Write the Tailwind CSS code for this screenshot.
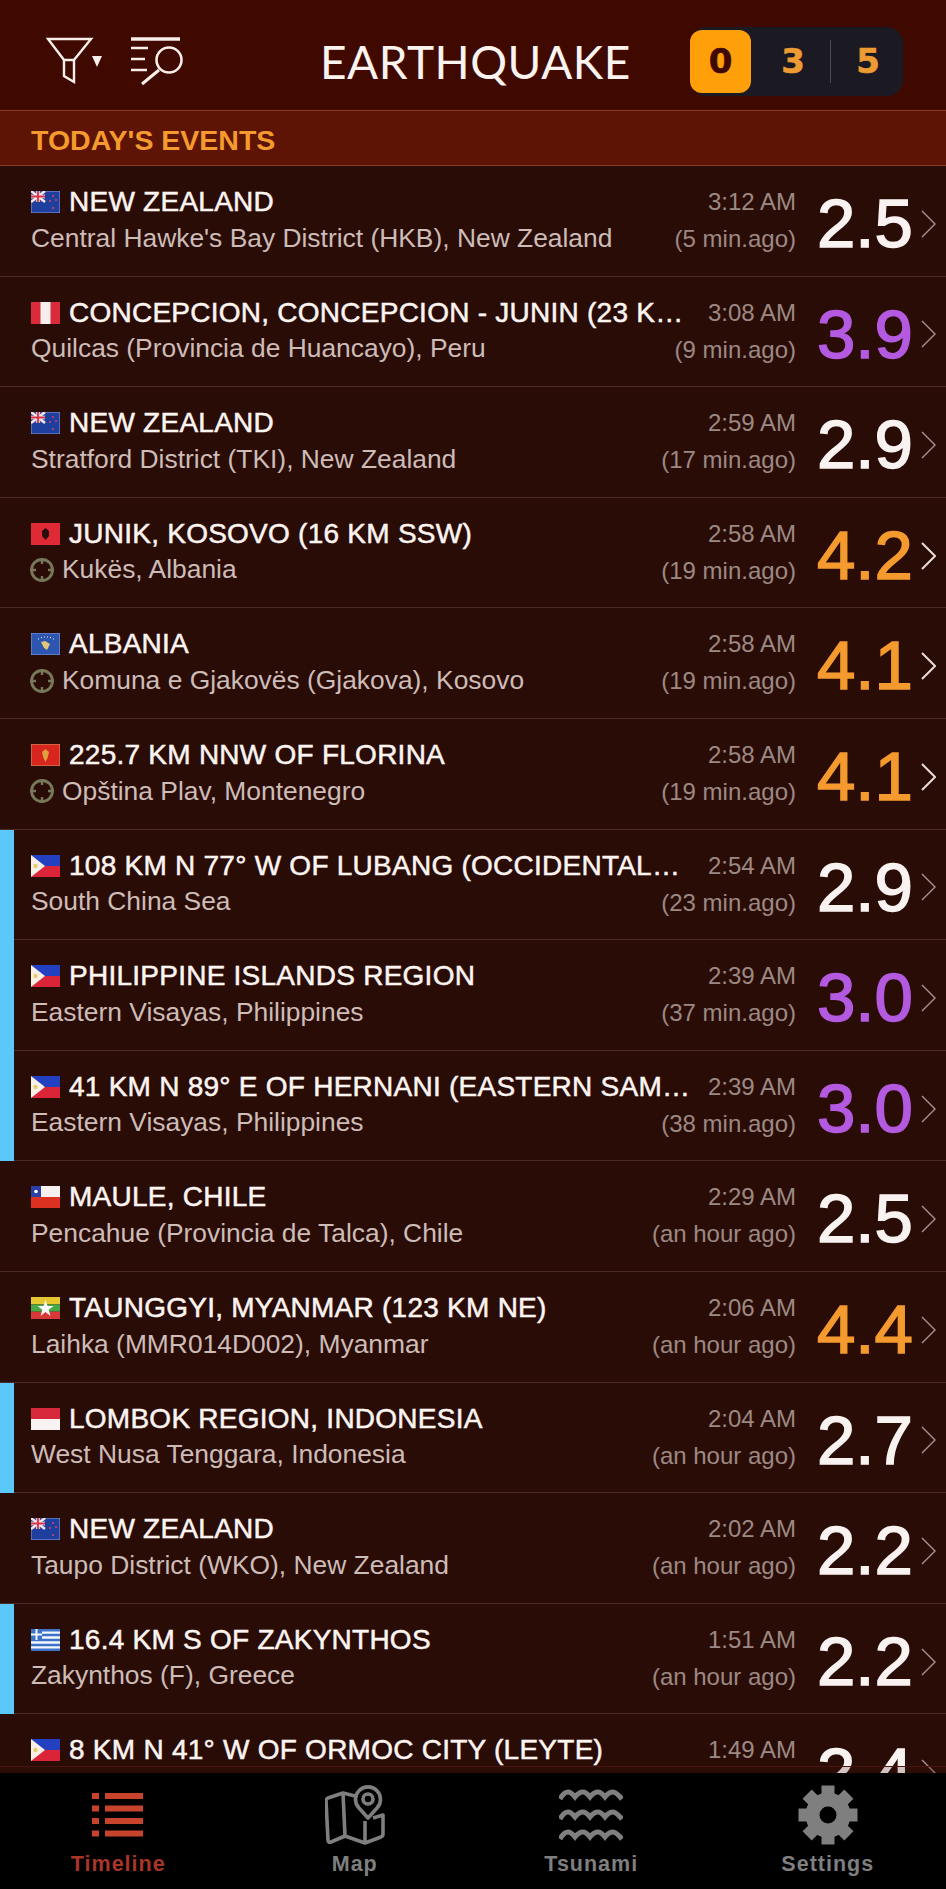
<!DOCTYPE html>
<html><head><meta charset="utf-8"><script src="https://cdn.jsdelivr.net/npm/@tailwindcss/browser@4"></script></head>
<body class="m-0 bg-black">
<div class="w-[946px] h-[1889px] flex flex-col overflow-hidden bg-[#2a0c06] font-['Liberation_Sans',Arial,sans-serif]">
<header class="h-[110px] shrink-0 bg-[#400900] flex items-center pt-[13px]">
  <div class="w-[320px] shrink-0 flex items-center pl-[46px] gap-[25px]">
    <svg width="60" height="50" viewBox="0 0 60 50" fill="none" stroke="#f8eeea" stroke-width="2.400"><path d="M2 2H45L28 23V45L18 39V23ZM18 23H28"/><path d="M46 19H56L51 30Z" fill="#f8eeea" stroke="none"/></svg>
    <svg width="52" height="50" viewBox="0 0 52 50" fill="none" stroke="#f8eeea" stroke-width="2.600"><path d="M0 2H49" stroke-width="3.500"/><path d="M0 11H17M0 22H14M0 33H16"/><circle cx="38" cy="23" r="12.500"/><path d="M28 33L11 47" stroke-width="3"/></svg>
  </div>
  <h1 class="text-[46px] leading-none font-normal text-[#fbf3ef] font-['Lato',sans-serif] tracking-[0.5px] w-[370px]">EARTHQUAKE</h1>
  <div class="w-[213px] h-[69px] rounded-[16px] bg-[#1b1a22] flex items-center font-bold text-[34px] text-[#ee9b34] font-['DejaVu_Sans',sans-serif] [-webkit-text-stroke:0.6px_currentColor]">
    <div class="w-[61px] h-[63px] rounded-[12px] bg-[#ff9f0a] text-[#3f0800] flex items-center justify-center">0</div>
    <div class="w-[79px] pl-[5px] text-center">3</div>
    <div class="w-px h-[43px] bg-[#4b4a50]"></div>
    <div class="w-[72px] pl-[2px] text-center">5</div>
  </div>
</header>
<div class="h-[56px] shrink-0 bg-[#5e1404] border-y border-[#873a22] flex items-center pl-[31px] pt-[4px] text-[28.500px] font-bold text-[#f49a2e]">TODAY'S EVENTS</div>
<main class="flex-1 overflow-hidden min-h-0">

<div class="flex h-[110.600px]"><div class="flex-1 flex pl-[31px] border-b border-[#4c2b25]"><div class="flex-1 min-w-0 pt-[18px]"><div class="flex items-center h-[36px] gap-[9px]"><svg width="29" height="22" viewBox="0 0 29 22" class="shrink-0"><rect width="29" height="22" fill="#1f3f9e" stroke="#8ea0d8"/><rect width="14" height="11" fill="#3c4b9a"/><path d="M0 0L14 11M14 0L0 11" stroke="#f3e6e6" stroke-width="2.500"/><path d="M7 0V11M0 5.500H14" stroke="#f3e6e6" stroke-width="3.500"/><path d="M7 0V11M0 5.500H14" stroke="#d8304a" stroke-width="1.800"/><circle cx="22" cy="5" r="1" fill="#e04060"/><circle cx="25" cy="9" r="1" fill="#e04060"/><circle cx="19" cy="10" r="1" fill="#e04060"/><circle cx="22" cy="17" r="1" fill="#e04060"/></svg><span class="text-[28px] text-[#fbf4f1] whitespace-nowrap [-webkit-text-stroke:0.5px_#fbf4f1] tracking-[0.25px]">NEW ZEALAND</span></div><div class="h-[37px] flex items-center text-[26.400px] text-[#cdbcb8] whitespace-nowrap">Central Hawke's Bay District (HKB), New Zealand</div></div><div class="w-[91px] shrink-0 pt-[18px] flex flex-col items-end text-[24px] text-[#9c8984] whitespace-nowrap"><div class="h-[36px] leading-[36px]">3:12 AM</div><div class="h-[37px] leading-[37px]">(5 min.ago)</div></div><div class="w-[104px] ml-[21px] shrink-0 flex items-center pt-[6px] text-[69px] text-[#f8f2f0] [-webkit-text-stroke:1.500px_currentColor]">2.5</div><div class="w-[25px] shrink-0 flex items-center pt-[6px]"><svg width="15" height="28" viewBox="0 0 15 28" fill="none" stroke="#a8938e" stroke-width="1.400"><path d="M1 1L14 14L1 27"/></svg></div></div></div>

<div class="flex h-[110.600px]"><div class="flex-1 flex pl-[31px] border-b border-[#4c2b25]"><div class="flex-1 min-w-0 pt-[18px]"><div class="flex items-center h-[36px] gap-[9px]"><svg width="29" height="22" viewBox="0 0 29 22" class="shrink-0"><rect width="29" height="22" fill="#f6eeee"/><rect width="9.500" height="22" fill="#d92b3a"/><rect x="19.500" width="9.500" height="22" fill="#d92b3a"/></svg><span class="text-[28px] text-[#fbf4f1] whitespace-nowrap [-webkit-text-stroke:0.5px_#fbf4f1] tracking-[0.25px]">CONCEPCION, CONCEPCION - JUNIN (23 K…</span></div><div class="h-[37px] flex items-center text-[26.400px] text-[#cdbcb8] whitespace-nowrap">Quilcas (Provincia de Huancayo), Peru</div></div><div class="w-[91px] shrink-0 pt-[18px] flex flex-col items-end text-[24px] text-[#9c8984] whitespace-nowrap"><div class="h-[36px] leading-[36px]">3:08 AM</div><div class="h-[37px] leading-[37px]">(9 min.ago)</div></div><div class="w-[104px] ml-[21px] shrink-0 flex items-center pt-[6px] text-[69px] text-[#b45ae0] [-webkit-text-stroke:1.500px_currentColor]">3.9</div><div class="w-[25px] shrink-0 flex items-center pt-[6px]"><svg width="15" height="28" viewBox="0 0 15 28" fill="none" stroke="#a8938e" stroke-width="1.400"><path d="M1 1L14 14L1 27"/></svg></div></div></div>

<div class="flex h-[110.600px]"><div class="flex-1 flex pl-[31px] border-b border-[#4c2b25]"><div class="flex-1 min-w-0 pt-[18px]"><div class="flex items-center h-[36px] gap-[9px]"><svg width="29" height="22" viewBox="0 0 29 22" class="shrink-0"><rect width="29" height="22" fill="#1f3f9e" stroke="#8ea0d8"/><rect width="14" height="11" fill="#3c4b9a"/><path d="M0 0L14 11M14 0L0 11" stroke="#f3e6e6" stroke-width="2.500"/><path d="M7 0V11M0 5.500H14" stroke="#f3e6e6" stroke-width="3.500"/><path d="M7 0V11M0 5.500H14" stroke="#d8304a" stroke-width="1.800"/><circle cx="22" cy="5" r="1" fill="#e04060"/><circle cx="25" cy="9" r="1" fill="#e04060"/><circle cx="19" cy="10" r="1" fill="#e04060"/><circle cx="22" cy="17" r="1" fill="#e04060"/></svg><span class="text-[28px] text-[#fbf4f1] whitespace-nowrap [-webkit-text-stroke:0.5px_#fbf4f1] tracking-[0.25px]">NEW ZEALAND</span></div><div class="h-[37px] flex items-center text-[26.400px] text-[#cdbcb8] whitespace-nowrap">Stratford District (TKI), New Zealand</div></div><div class="w-[91px] shrink-0 pt-[18px] flex flex-col items-end text-[24px] text-[#9c8984] whitespace-nowrap"><div class="h-[36px] leading-[36px]">2:59 AM</div><div class="h-[37px] leading-[37px]">(17 min.ago)</div></div><div class="w-[104px] ml-[21px] shrink-0 flex items-center pt-[6px] text-[69px] text-[#f8f2f0] [-webkit-text-stroke:1.500px_currentColor]">2.9</div><div class="w-[25px] shrink-0 flex items-center pt-[6px]"><svg width="15" height="28" viewBox="0 0 15 28" fill="none" stroke="#a8938e" stroke-width="1.400"><path d="M1 1L14 14L1 27"/></svg></div></div></div>

<div class="flex h-[110.600px]"><div class="flex-1 flex pl-[31px] border-b border-[#4c2b25]"><div class="flex-1 min-w-0 pt-[18px]"><div class="flex items-center h-[36px] gap-[9px]"><svg width="29" height="22" viewBox="0 0 29 22" class="shrink-0"><rect width="29" height="22" fill="#df2a35"/><path d="M14.500 5L18 8V13L14.500 17L11 13V8Z" fill="#2a0c0c"/></svg><span class="text-[28px] text-[#fbf4f1] whitespace-nowrap [-webkit-text-stroke:0.5px_#fbf4f1] tracking-[0.25px]">JUNIK, KOSOVO (16 KM SSW)</span></div><div class="h-[37px] flex items-center text-[26.400px] text-[#cdbcb8] whitespace-nowrap gap-[7px] -ml-[2px]"><svg width="26" height="26" viewBox="0 0 26 26" fill="none" stroke="#77775a" stroke-width="2.800" class="shrink-0"><circle cx="13" cy="13" r="10.500"/><path d="M13 1V7M13 19V25M1 13H7M19 13H25" stroke-width="2.400"/></svg><span>Kukës, Albania</span></div></div><div class="w-[91px] shrink-0 pt-[18px] flex flex-col items-end text-[24px] text-[#9c8984] whitespace-nowrap"><div class="h-[36px] leading-[36px]">2:58 AM</div><div class="h-[37px] leading-[37px]">(19 min.ago)</div></div><div class="w-[104px] ml-[21px] shrink-0 flex items-center pt-[6px] text-[69px] text-[#f49a2e] [-webkit-text-stroke:1.500px_currentColor]">4.2</div><div class="w-[25px] shrink-0 flex items-center pt-[6px]"><svg width="15" height="28" viewBox="0 0 15 28" fill="none" stroke="#e8dcd8" stroke-width="2"><path d="M1 1L14 14L1 27"/></svg></div></div></div>

<div class="flex h-[110.600px]"><div class="flex-1 flex pl-[31px] border-b border-[#4c2b25]"><div class="flex-1 min-w-0 pt-[18px]"><div class="flex items-center h-[36px] gap-[9px]"><svg width="29" height="22" viewBox="0 0 29 22" class="shrink-0"><rect width="29" height="22" fill="#2d56b0" stroke="#8ea0d8"/><path d="M10 9L14 8L19 11L16 17L13 15Z" fill="#e0c878"/><path d="M7 6H8M10 4.500H11M13 4H14M16 4H17M19 4.500H20M22 6H23" stroke="#f3ead8" stroke-width="1.200"/></svg><span class="text-[28px] text-[#fbf4f1] whitespace-nowrap [-webkit-text-stroke:0.5px_#fbf4f1] tracking-[0.25px]">ALBANIA</span></div><div class="h-[37px] flex items-center text-[26.400px] text-[#cdbcb8] whitespace-nowrap gap-[7px] -ml-[2px]"><svg width="26" height="26" viewBox="0 0 26 26" fill="none" stroke="#77775a" stroke-width="2.800" class="shrink-0"><circle cx="13" cy="13" r="10.500"/><path d="M13 1V7M13 19V25M1 13H7M19 13H25" stroke-width="2.400"/></svg><span>Komuna e Gjakovës (Gjakova), Kosovo</span></div></div><div class="w-[91px] shrink-0 pt-[18px] flex flex-col items-end text-[24px] text-[#9c8984] whitespace-nowrap"><div class="h-[36px] leading-[36px]">2:58 AM</div><div class="h-[37px] leading-[37px]">(19 min.ago)</div></div><div class="w-[104px] ml-[21px] shrink-0 flex items-center pt-[6px] text-[69px] text-[#f49a2e] [-webkit-text-stroke:1.500px_currentColor]">4.1</div><div class="w-[25px] shrink-0 flex items-center pt-[6px]"><svg width="15" height="28" viewBox="0 0 15 28" fill="none" stroke="#e8dcd8" stroke-width="2"><path d="M1 1L14 14L1 27"/></svg></div></div></div>

<div class="flex h-[110.600px]"><div class="flex-1 flex pl-[31px] border-b border-[#4c2b25]"><div class="flex-1 min-w-0 pt-[18px]"><div class="flex items-center h-[36px] gap-[9px]"><svg width="29" height="22" viewBox="0 0 29 22" class="shrink-0"><rect width="29" height="22" fill="#d8261f" stroke="#c9a060"/><path d="M14.500 5L18 8L16.500 14L14.500 18L12.500 14L11 8Z" fill="#e0a040"/></svg><span class="text-[28px] text-[#fbf4f1] whitespace-nowrap [-webkit-text-stroke:0.5px_#fbf4f1] tracking-[0.25px]">225.7 KM NNW OF FLORINA</span></div><div class="h-[37px] flex items-center text-[26.400px] text-[#cdbcb8] whitespace-nowrap gap-[7px] -ml-[2px]"><svg width="26" height="26" viewBox="0 0 26 26" fill="none" stroke="#77775a" stroke-width="2.800" class="shrink-0"><circle cx="13" cy="13" r="10.500"/><path d="M13 1V7M13 19V25M1 13H7M19 13H25" stroke-width="2.400"/></svg><span>Opština Plav, Montenegro</span></div></div><div class="w-[91px] shrink-0 pt-[18px] flex flex-col items-end text-[24px] text-[#9c8984] whitespace-nowrap"><div class="h-[36px] leading-[36px]">2:58 AM</div><div class="h-[37px] leading-[37px]">(19 min.ago)</div></div><div class="w-[104px] ml-[21px] shrink-0 flex items-center pt-[6px] text-[69px] text-[#f49a2e] [-webkit-text-stroke:1.500px_currentColor]">4.1</div><div class="w-[25px] shrink-0 flex items-center pt-[6px]"><svg width="15" height="28" viewBox="0 0 15 28" fill="none" stroke="#e8dcd8" stroke-width="2"><path d="M1 1L14 14L1 27"/></svg></div></div></div>

<div class="flex h-[110.600px]"><div class="w-[14px] shrink-0 bg-[#5ac8fa]"></div><div class="flex-1 min-w-0 flex pl-[17px] border-b border-[#4c2b25]"><div class="flex-1 min-w-0 pt-[18px]"><div class="flex items-center h-[36px] gap-[9px]"><svg width="29" height="22" viewBox="0 0 29 22" class="shrink-0"><rect width="29" height="11" fill="#2340c0"/><rect y="11" width="29" height="11" fill="#dc2438"/><path d="M0 0L14 11L0 22Z" fill="#f8f0e8"/><circle cx="4.500" cy="11" r="2.200" fill="#e8cc70"/></svg><span class="text-[28px] text-[#fbf4f1] whitespace-nowrap [-webkit-text-stroke:0.5px_#fbf4f1] tracking-[0.25px]">108 KM N 77° W OF LUBANG (OCCIDENTAL…</span></div><div class="h-[37px] flex items-center text-[26.400px] text-[#cdbcb8] whitespace-nowrap">South China Sea</div></div><div class="w-[91px] shrink-0 pt-[18px] flex flex-col items-end text-[24px] text-[#9c8984] whitespace-nowrap"><div class="h-[36px] leading-[36px]">2:54 AM</div><div class="h-[37px] leading-[37px]">(23 min.ago)</div></div><div class="w-[104px] ml-[21px] shrink-0 flex items-center pt-[6px] text-[69px] text-[#f8f2f0] [-webkit-text-stroke:1.500px_currentColor]">2.9</div><div class="w-[25px] shrink-0 flex items-center pt-[6px]"><svg width="15" height="28" viewBox="0 0 15 28" fill="none" stroke="#a8938e" stroke-width="1.400"><path d="M1 1L14 14L1 27"/></svg></div></div></div>

<div class="flex h-[110.600px]"><div class="w-[14px] shrink-0 bg-[#5ac8fa]"></div><div class="flex-1 min-w-0 flex pl-[17px] border-b border-[#4c2b25]"><div class="flex-1 min-w-0 pt-[18px]"><div class="flex items-center h-[36px] gap-[9px]"><svg width="29" height="22" viewBox="0 0 29 22" class="shrink-0"><rect width="29" height="11" fill="#2340c0"/><rect y="11" width="29" height="11" fill="#dc2438"/><path d="M0 0L14 11L0 22Z" fill="#f8f0e8"/><circle cx="4.500" cy="11" r="2.200" fill="#e8cc70"/></svg><span class="text-[28px] text-[#fbf4f1] whitespace-nowrap [-webkit-text-stroke:0.5px_#fbf4f1] tracking-[0.25px]">PHILIPPINE ISLANDS REGION</span></div><div class="h-[37px] flex items-center text-[26.400px] text-[#cdbcb8] whitespace-nowrap">Eastern Visayas, Philippines</div></div><div class="w-[91px] shrink-0 pt-[18px] flex flex-col items-end text-[24px] text-[#9c8984] whitespace-nowrap"><div class="h-[36px] leading-[36px]">2:39 AM</div><div class="h-[37px] leading-[37px]">(37 min.ago)</div></div><div class="w-[104px] ml-[21px] shrink-0 flex items-center pt-[6px] text-[69px] text-[#b45ae0] [-webkit-text-stroke:1.500px_currentColor]">3.0</div><div class="w-[25px] shrink-0 flex items-center pt-[6px]"><svg width="15" height="28" viewBox="0 0 15 28" fill="none" stroke="#a8938e" stroke-width="1.400"><path d="M1 1L14 14L1 27"/></svg></div></div></div>

<div class="flex h-[110.600px]"><div class="w-[14px] shrink-0 bg-[#5ac8fa]"></div><div class="flex-1 min-w-0 flex pl-[17px] border-b border-[#4c2b25]"><div class="flex-1 min-w-0 pt-[18px]"><div class="flex items-center h-[36px] gap-[9px]"><svg width="29" height="22" viewBox="0 0 29 22" class="shrink-0"><rect width="29" height="11" fill="#2340c0"/><rect y="11" width="29" height="11" fill="#dc2438"/><path d="M0 0L14 11L0 22Z" fill="#f8f0e8"/><circle cx="4.500" cy="11" r="2.200" fill="#e8cc70"/></svg><span class="text-[28px] text-[#fbf4f1] whitespace-nowrap [-webkit-text-stroke:0.5px_#fbf4f1] tracking-[0.25px]">41 KM N 89° E OF HERNANI (EASTERN SAM…</span></div><div class="h-[37px] flex items-center text-[26.400px] text-[#cdbcb8] whitespace-nowrap">Eastern Visayas, Philippines</div></div><div class="w-[91px] shrink-0 pt-[18px] flex flex-col items-end text-[24px] text-[#9c8984] whitespace-nowrap"><div class="h-[36px] leading-[36px]">2:39 AM</div><div class="h-[37px] leading-[37px]">(38 min.ago)</div></div><div class="w-[104px] ml-[21px] shrink-0 flex items-center pt-[6px] text-[69px] text-[#b45ae0] [-webkit-text-stroke:1.500px_currentColor]">3.0</div><div class="w-[25px] shrink-0 flex items-center pt-[6px]"><svg width="15" height="28" viewBox="0 0 15 28" fill="none" stroke="#a8938e" stroke-width="1.400"><path d="M1 1L14 14L1 27"/></svg></div></div></div>

<div class="flex h-[110.600px]"><div class="flex-1 flex pl-[31px] border-b border-[#4c2b25]"><div class="flex-1 min-w-0 pt-[18px]"><div class="flex items-center h-[36px] gap-[9px]"><svg width="29" height="22" viewBox="0 0 29 22" class="shrink-0"><rect width="29" height="11" fill="#f6f0f0"/><rect y="11" width="29" height="11" fill="#dc3020"/><rect width="10" height="11" fill="#2840a8"/><circle cx="5" cy="5.500" r="1.800" fill="#fff"/></svg><span class="text-[28px] text-[#fbf4f1] whitespace-nowrap [-webkit-text-stroke:0.5px_#fbf4f1] tracking-[0.25px]">MAULE, CHILE</span></div><div class="h-[37px] flex items-center text-[26.400px] text-[#cdbcb8] whitespace-nowrap">Pencahue (Provincia de Talca), Chile</div></div><div class="w-[91px] shrink-0 pt-[18px] flex flex-col items-end text-[24px] text-[#9c8984] whitespace-nowrap"><div class="h-[36px] leading-[36px]">2:29 AM</div><div class="h-[37px] leading-[37px]">(an hour ago)</div></div><div class="w-[104px] ml-[21px] shrink-0 flex items-center pt-[6px] text-[69px] text-[#f8f2f0] [-webkit-text-stroke:1.500px_currentColor]">2.5</div><div class="w-[25px] shrink-0 flex items-center pt-[6px]"><svg width="15" height="28" viewBox="0 0 15 28" fill="none" stroke="#a8938e" stroke-width="1.400"><path d="M1 1L14 14L1 27"/></svg></div></div></div>

<div class="flex h-[110.600px]"><div class="flex-1 flex pl-[31px] border-b border-[#4c2b25]"><div class="flex-1 min-w-0 pt-[18px]"><div class="flex items-center h-[36px] gap-[9px]"><svg width="29" height="22" viewBox="0 0 29 22" class="shrink-0"><rect width="29" height="7.400" fill="#e8c830"/><rect y="7.400" width="29" height="7.300" fill="#48a848"/><rect y="14.700" width="29" height="7.300" fill="#d83838"/><path d="M14.500 3L16.500 9L22.500 9L17.700 12.700L19.500 19L14.500 15L9.500 19L11.300 12.700L6.500 9L12.500 9Z" fill="#fafafa"/></svg><span class="text-[28px] text-[#fbf4f1] whitespace-nowrap [-webkit-text-stroke:0.5px_#fbf4f1] tracking-[0.25px]">TAUNGGYI, MYANMAR (123 KM NE)</span></div><div class="h-[37px] flex items-center text-[26.400px] text-[#cdbcb8] whitespace-nowrap">Laihka (MMR014D002), Myanmar</div></div><div class="w-[91px] shrink-0 pt-[18px] flex flex-col items-end text-[24px] text-[#9c8984] whitespace-nowrap"><div class="h-[36px] leading-[36px]">2:06 AM</div><div class="h-[37px] leading-[37px]">(an hour ago)</div></div><div class="w-[104px] ml-[21px] shrink-0 flex items-center pt-[6px] text-[69px] text-[#f49a2e] [-webkit-text-stroke:1.500px_currentColor]">4.4</div><div class="w-[25px] shrink-0 flex items-center pt-[6px]"><svg width="15" height="28" viewBox="0 0 15 28" fill="none" stroke="#a8938e" stroke-width="1.400"><path d="M1 1L14 14L1 27"/></svg></div></div></div>

<div class="flex h-[110.600px]"><div class="w-[14px] shrink-0 bg-[#5ac8fa]"></div><div class="flex-1 min-w-0 flex pl-[17px] border-b border-[#4c2b25]"><div class="flex-1 min-w-0 pt-[18px]"><div class="flex items-center h-[36px] gap-[9px]"><svg width="29" height="22" viewBox="0 0 29 22" class="shrink-0"><rect width="29" height="11" fill="#d8283c"/><rect y="11" width="29" height="11" fill="#f8f2f2"/></svg><span class="text-[28px] text-[#fbf4f1] whitespace-nowrap [-webkit-text-stroke:0.5px_#fbf4f1] tracking-[0.25px]">LOMBOK REGION, INDONESIA</span></div><div class="h-[37px] flex items-center text-[26.400px] text-[#cdbcb8] whitespace-nowrap">West Nusa Tenggara, Indonesia</div></div><div class="w-[91px] shrink-0 pt-[18px] flex flex-col items-end text-[24px] text-[#9c8984] whitespace-nowrap"><div class="h-[36px] leading-[36px]">2:04 AM</div><div class="h-[37px] leading-[37px]">(an hour ago)</div></div><div class="w-[104px] ml-[21px] shrink-0 flex items-center pt-[6px] text-[69px] text-[#f8f2f0] [-webkit-text-stroke:1.500px_currentColor]">2.7</div><div class="w-[25px] shrink-0 flex items-center pt-[6px]"><svg width="15" height="28" viewBox="0 0 15 28" fill="none" stroke="#a8938e" stroke-width="1.400"><path d="M1 1L14 14L1 27"/></svg></div></div></div>

<div class="flex h-[110.600px]"><div class="flex-1 flex pl-[31px] border-b border-[#4c2b25]"><div class="flex-1 min-w-0 pt-[18px]"><div class="flex items-center h-[36px] gap-[9px]"><svg width="29" height="22" viewBox="0 0 29 22" class="shrink-0"><rect width="29" height="22" fill="#1f3f9e" stroke="#8ea0d8"/><rect width="14" height="11" fill="#3c4b9a"/><path d="M0 0L14 11M14 0L0 11" stroke="#f3e6e6" stroke-width="2.500"/><path d="M7 0V11M0 5.500H14" stroke="#f3e6e6" stroke-width="3.500"/><path d="M7 0V11M0 5.500H14" stroke="#d8304a" stroke-width="1.800"/><circle cx="22" cy="5" r="1" fill="#e04060"/><circle cx="25" cy="9" r="1" fill="#e04060"/><circle cx="19" cy="10" r="1" fill="#e04060"/><circle cx="22" cy="17" r="1" fill="#e04060"/></svg><span class="text-[28px] text-[#fbf4f1] whitespace-nowrap [-webkit-text-stroke:0.5px_#fbf4f1] tracking-[0.25px]">NEW ZEALAND</span></div><div class="h-[37px] flex items-center text-[26.400px] text-[#cdbcb8] whitespace-nowrap">Taupo District (WKO), New Zealand</div></div><div class="w-[91px] shrink-0 pt-[18px] flex flex-col items-end text-[24px] text-[#9c8984] whitespace-nowrap"><div class="h-[36px] leading-[36px]">2:02 AM</div><div class="h-[37px] leading-[37px]">(an hour ago)</div></div><div class="w-[104px] ml-[21px] shrink-0 flex items-center pt-[6px] text-[69px] text-[#f8f2f0] [-webkit-text-stroke:1.500px_currentColor]">2.2</div><div class="w-[25px] shrink-0 flex items-center pt-[6px]"><svg width="15" height="28" viewBox="0 0 15 28" fill="none" stroke="#a8938e" stroke-width="1.400"><path d="M1 1L14 14L1 27"/></svg></div></div></div>

<div class="flex h-[110.600px]"><div class="w-[14px] shrink-0 bg-[#5ac8fa]"></div><div class="flex-1 min-w-0 flex pl-[17px] border-b border-[#4c2b25]"><div class="flex-1 min-w-0 pt-[18px]"><div class="flex items-center h-[36px] gap-[9px]"><svg width="29" height="22" viewBox="0 0 29 22" class="shrink-0"><rect width="29" height="22" fill="#f4f6fa"/><path d="M0 1.200H29M0 6H29M0 11H29M0 16H29M0 20.800H29" stroke="#3a72c8" stroke-width="2.400"/><rect width="11" height="11" fill="#3a72c8"/><path d="M5.500 0V11M0 5.500H11" stroke="#f4f6fa" stroke-width="2"/></svg><span class="text-[28px] text-[#fbf4f1] whitespace-nowrap [-webkit-text-stroke:0.5px_#fbf4f1] tracking-[0.25px]">16.4 KM S OF ZAKYNTHOS</span></div><div class="h-[37px] flex items-center text-[26.400px] text-[#cdbcb8] whitespace-nowrap">Zakynthos (F), Greece</div></div><div class="w-[91px] shrink-0 pt-[18px] flex flex-col items-end text-[24px] text-[#9c8984] whitespace-nowrap"><div class="h-[36px] leading-[36px]">1:51 AM</div><div class="h-[37px] leading-[37px]">(an hour ago)</div></div><div class="w-[104px] ml-[21px] shrink-0 flex items-center pt-[6px] text-[69px] text-[#f8f2f0] [-webkit-text-stroke:1.500px_currentColor]">2.2</div><div class="w-[25px] shrink-0 flex items-center pt-[6px]"><svg width="15" height="28" viewBox="0 0 15 28" fill="none" stroke="#a8938e" stroke-width="1.400"><path d="M1 1L14 14L1 27"/></svg></div></div></div>

<div class="flex h-[110.600px]"><div class="flex-1 flex pl-[31px]"><div class="flex-1 min-w-0 pt-[18px]"><div class="flex items-center h-[36px] gap-[9px]"><svg width="29" height="22" viewBox="0 0 29 22" class="shrink-0"><rect width="29" height="11" fill="#2340c0"/><rect y="11" width="29" height="11" fill="#dc2438"/><path d="M0 0L14 11L0 22Z" fill="#f8f0e8"/><circle cx="4.500" cy="11" r="2.200" fill="#e8cc70"/></svg><span class="text-[28px] text-[#fbf4f1] whitespace-nowrap [-webkit-text-stroke:0.5px_#fbf4f1] tracking-[0.25px]">8 KM N 41° W OF ORMOC CITY (LEYTE)</span></div></div><div class="w-[91px] shrink-0 pt-[18px] flex flex-col items-end text-[24px] text-[#9c8984] whitespace-nowrap"><div class="h-[36px] leading-[36px]">1:49 AM</div></div><div class="w-[104px] ml-[21px] shrink-0 flex items-center pt-[6px] text-[69px] text-[#f8f2f0] [-webkit-text-stroke:1.500px_currentColor]">2.4</div><div class="w-[25px] shrink-0 flex items-center pt-[6px]"><svg width="15" height="28" viewBox="0 0 15 28" fill="none" stroke="#a8938e" stroke-width="1.400"><path d="M1 1L14 14L1 27"/></svg></div></div></div>

</main>
<nav class="h-[116px] shrink-0 bg-black grid grid-cols-4 text-[21.500px] font-bold tracking-[1px] text-[#7f7f7f] relative">
  <div class="absolute left-0 right-0 -top-[7px] h-[7px] bg-[#3a0f0a]/20 border-t border-[#4a1510]"></div>
  <div class="flex flex-col items-center"><div class="h-[75px] flex items-center pt-[8px]"><svg width="52" height="44" viewBox="0 0 52 44" fill="#c8432b"><rect y="0" width="7" height="6"/><rect x="13" y="0" width="38" height="6"/><rect y="12.500" width="7" height="6"/><rect x="13" y="12.500" width="38" height="6"/><rect y="25" width="7" height="6"/><rect x="13" y="25" width="38" height="6"/><rect y="37.500" width="7" height="6"/><rect x="13" y="37.500" width="38" height="6"/></svg></div><span class="text-[#a8352a]">Timeline</span></div>
  <div class="flex flex-col items-center"><div class="h-[75px] flex items-center pt-[8px]"><svg width="60" height="60" viewBox="0 0 60 60" fill="none" stroke="#7f7f7f" stroke-width="3.600" stroke-linejoin="round"><path d="M30 11L18 8L3 13Q1 14 1 16L3 55Q3 58 6 57L20 51L40 58L56 52Q58 51 58 49V30L48 33"/><path d="M18 8L20 51M40 36V58"/><path d="M43 33L34 23A12.500 12.500 0 1 1 52 23Z"/><circle cx="43" cy="14" r="5"/></svg></div><span>Map</span></div>
  <div class="flex flex-col items-center"><div class="h-[75px] flex items-center pt-[8px]"><svg width="64" height="52" viewBox="0 0 64 52" fill="none" stroke="#7f7f7f" stroke-width="5"><path d="M1 10Q5 3 9 3Q12 3 16 8Q20 3 24 3Q27 3 31 8Q35 3 39 3Q42 3 46 8Q50 3 54 3Q57 3 63 10"/><path d="M1 30Q5 23 9 23Q12 23 16 28Q20 23 24 23Q27 23 31 28Q35 23 39 23Q42 23 46 28Q50 23 54 23Q57 23 63 30"/><path d="M1 50Q5 43 9 43Q12 43 16 48Q20 43 24 43Q27 43 31 48Q35 43 39 43Q42 43 46 48Q50 43 54 43Q57 43 63 50"/></svg></div><span>Tsunami</span></div>
  <div class="flex flex-col items-center"><div class="h-[75px] flex items-center pt-[8px]"><svg width="60" height="60" viewBox="-30 -30 60 60" fill="#7f7f7f"><circle r="15.500" fill="none" stroke="#7f7f7f" stroke-width="14"/><rect x="-6.500" y="-29.500" width="13" height="59"/><rect x="-6.500" y="-29.500" width="13" height="59" transform="rotate(45)"/><rect x="-6.500" y="-29.500" width="13" height="59" transform="rotate(90)"/><rect x="-6.500" y="-29.500" width="13" height="59" transform="rotate(135)"/><circle r="8.500" fill="#000"/></svg></div><span>Settings</span></div>
</nav>
</div>
</body></html>
